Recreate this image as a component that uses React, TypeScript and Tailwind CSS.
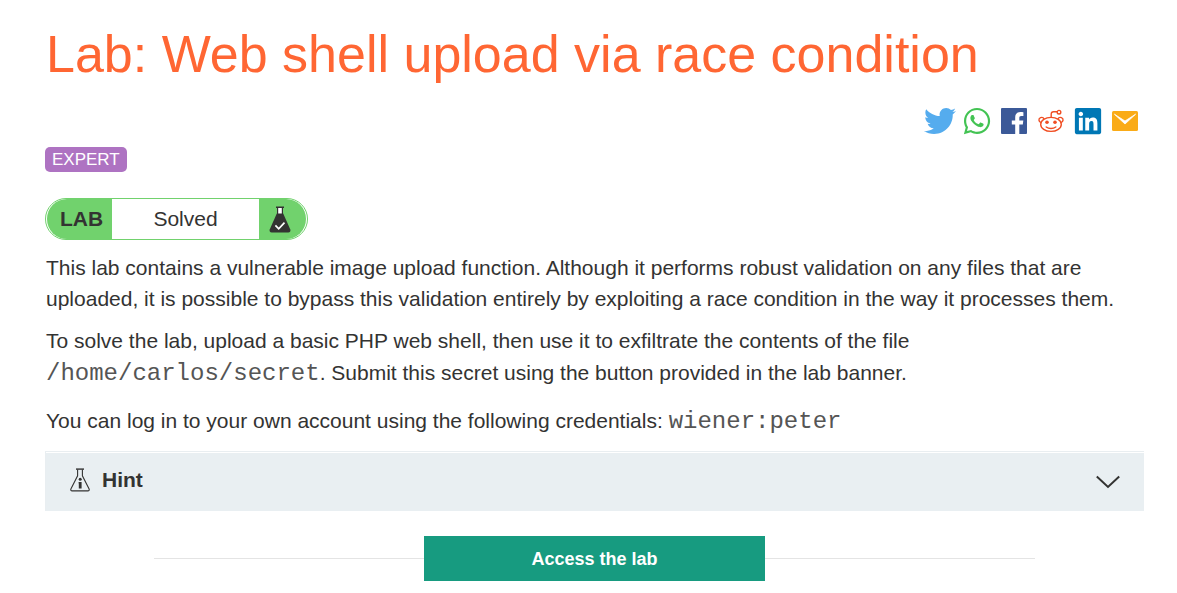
import { useState } from "react";
import { FaTwitter, FaWhatsapp, FaLinkedin } from "react-icons/fa";

function FacebookIcon() {
  return (
    <svg viewBox="0 0 26 26" className="h-[26px] w-[26px]" aria-hidden="true">
      <rect width="26" height="26" rx="1" fill="#3b5998" />
      <path
        d="M14.2 26V16.4h-3.4v-4h3.4V9.3c0-3.4 2.1-5.2 5.1-5.2 1.5 0 2.7.1 3.1.2v3.7h-2.1c-1.7 0-2 .8-2 2v2.4h4l-.5 4h-3.5V26z"
        fill="#fff"
      />
    </svg>
  );
}

function RedditIcon() {
  return (
    <svg
      viewBox="0 0 26 24"
      className="h-6 w-[26px]"
      fill="none"
      stroke="#f04e23"
      strokeWidth="1.4"
      aria-hidden="true"
    >
      <ellipse cx="13" cy="15.4" rx="10.3" ry="7" />
      <path d="M13.2 8.4V5.2c0-1.6.8-2.4 2.4-2.4h3.6" />
      <circle cx="21" cy="3.2" r="1.8" />
      <path d="M3.2 13.6C.4 13 .2 9.4 2.6 8.6c1.5-.5 2.9.1 3.5 1.4" />
      <path d="M22.8 13.6c2.8-.6 3-4.2.6-5-1.5-.5-2.9.1-3.5 1.4" />
      <path d="M8.2 18c2.6 2 7 2 9.6 0" strokeLinecap="round" />
      <circle cx="9" cy="13.2" r="1.8" fill="#f04e23" stroke="none" />
      <circle cx="17" cy="13.2" r="1.8" fill="#f04e23" stroke="none" />
    </svg>
  );
}

function MailIcon() {
  return (
    <svg viewBox="0 0 26 20" className="h-5 w-[26px]" aria-hidden="true">
      <rect width="26" height="20" rx="1.5" fill="#faab17" />
      <path d="M2.4 3.2L13 13 23.6 3.2 13 10z" fill="#fff" stroke="#fff" strokeWidth="0.8" />
    </svg>
  );
}

function SolvedFlask() {
  return (
    <svg viewBox="0 0 22 27" className="h-[27px] w-[22px]" aria-hidden="true">
      <path d="M8.2 2h5.6v7H8.2z" fill="#fff" />
      <path d="M7 .5h8v1.4h-1V8h-1.2V1.9H9.2V8H8V1.9H7z" fill="#333332" />
      <path d="M7.8 7.4h6.4l7 15.8c.7 1.8-.1 3.2-1.9 3.2H2.7c-1.8 0-2.6-1.4-1.9-3.2z" fill="#333332" />
      <path d="M6.4 19.4l3.3 3.4 5.8-6.2" fill="none" stroke="#fff" strokeWidth="1.7" />
    </svg>
  );
}

function HintFlask() {
  return (
    <svg viewBox="0 0 20 24" className="h-6 w-5" fill="none" stroke="#333332" aria-hidden="true">
      <path d="M6 1.1h8" strokeWidth="1.4" />
      <path
        d="M7.6 1.5v6.3L1 20.7c-.6 1.3-.1 2.2 1.2 2.2h15.6c1.3 0 1.8-.9 1.2-2.2L12.4 7.8V1.5"
        strokeWidth="1.1"
      />
      <circle cx="10.2" cy="11.3" r="1.5" fill="#333332" stroke="none" />
      <path d="M8.6 14h3v6.6H8.8V15.4h-.2z" fill="#333332" stroke="none" />
    </svg>
  );
}

const shares = [
  { name: "Twitter", icon: <FaTwitter className="h-8 w-8 text-[#55acee]" /> },
  { name: "WhatsApp", icon: <FaWhatsapp className="h-[30px] w-[30px] text-[#43c353]" /> },
  { name: "Facebook", icon: <FacebookIcon /> },
  { name: "Reddit", icon: <RedditIcon /> },
  { name: "LinkedIn", icon: <FaLinkedin className="h-[30px] w-[30px] text-[#0077b5]" /> },
  { name: "Email", icon: <MailIcon /> },
];

function Code({ children }: { children: string }) {
  return (
    <code className="font-['Liberation_Mono','Courier_New',monospace] text-2xl leading-none text-[#555]">
      {children}
    </code>
  );
}

export default function App() {
  const [open, setOpen] = useState(false);

  return (
    <main className="bg-white pt-6 pr-[33px] pb-3 pl-[45px] font-['Liberation_Sans',Arial,sans-serif] text-[#333332]">
      <h1 className="pl-px text-[52px] leading-[60px] text-[#ff6633]">
        Lab: Web shell upload via race condition
      </h1>

      <nav aria-label="Share" className="mt-[21px] flex h-8 items-center justify-end gap-[5px] pr-[3px]">
        {shares.map((share) => (
          <a
            key={share.name}
            href="#share"
            aria-label={share.name}
            className="flex h-8 w-8 items-center justify-center"
          >
            {share.icon}
          </a>
        ))}
      </nav>

      <div className="mt-[10px] flex">
        <span className="rounded-[5px] bg-[#ae73c2] px-[7px] text-[17px] leading-[25px] text-white">
          EXPERT
        </span>
      </div>

      <div className="mt-[26px] flex">
        <div className="flex h-[42px] w-[263px] rounded-full border border-[#71d26d] px-px text-[21px]">
          <div className="flex w-[65px] items-center justify-center rounded-l-full bg-[#71d26d] pl-1 font-bold">
            LAB
          </div>
          <div className="flex flex-1 items-center justify-center">Solved</div>
          <div className="flex w-[47px] items-center rounded-r-full bg-[#71d26d] pl-[10px]">
            <SolvedFlask />
          </div>
        </div>
      </div>

      <div className="pl-px text-[21px]">
        <p className="mt-3 leading-[31px]">
          This lab contains a vulnerable image upload function. Although it performs robust
          validation on any files that are uploaded, it is possible to bypass this validation
          entirely by exploiting a race condition in the way it processes them.
        </p>
        <p className="mt-[11px] leading-8">
          To solve the lab, upload a basic PHP web shell, then use it to exfiltrate the contents of
          the file <Code>/home/carlos/secret</Code>. Submit this secret using the button provided in
          the lab banner.
        </p>
        <p className="mt-4 leading-8">
          You can log in to your own account using the following credentials:{" "}
          <Code>wiener:peter</Code>
        </p>
      </div>

      <section className="mt-[14px] border-t border-l border-[#e9eef1] pt-px">
        <button
          type="button"
          aria-expanded={open}
          onClick={() => setOpen(!open)}
          className="flex h-[58px] w-full items-center bg-[#e9eff2] pr-6 pb-1 pl-6 text-left"
        >
          <HintFlask />
          <span className="ml-3 flex-1 text-[21px] leading-8 font-bold">Hint</span>
          <svg
            viewBox="0 0 24 14"
            className="mt-1 h-[14px] w-6"
            fill="none"
            stroke="#333332"
            strokeWidth="2"
            aria-hidden="true"
          >
            <path d="M.8 1.6L12 12 23.2 1.6" />
          </svg>
        </button>
      </section>

      <div className="mx-[109px] mt-[25px] flex items-center">
        <span className="h-px flex-1 bg-[#e4e4e4]" />
        <a
          href="#lab"
          className="flex h-[45px] w-[341px] items-center justify-center bg-[#179b80] text-lg font-bold text-white"
        >
          Access the lab
        </a>
        <span className="h-px flex-1 bg-[#e4e4e4]" />
      </div>
    </main>
  );
}
